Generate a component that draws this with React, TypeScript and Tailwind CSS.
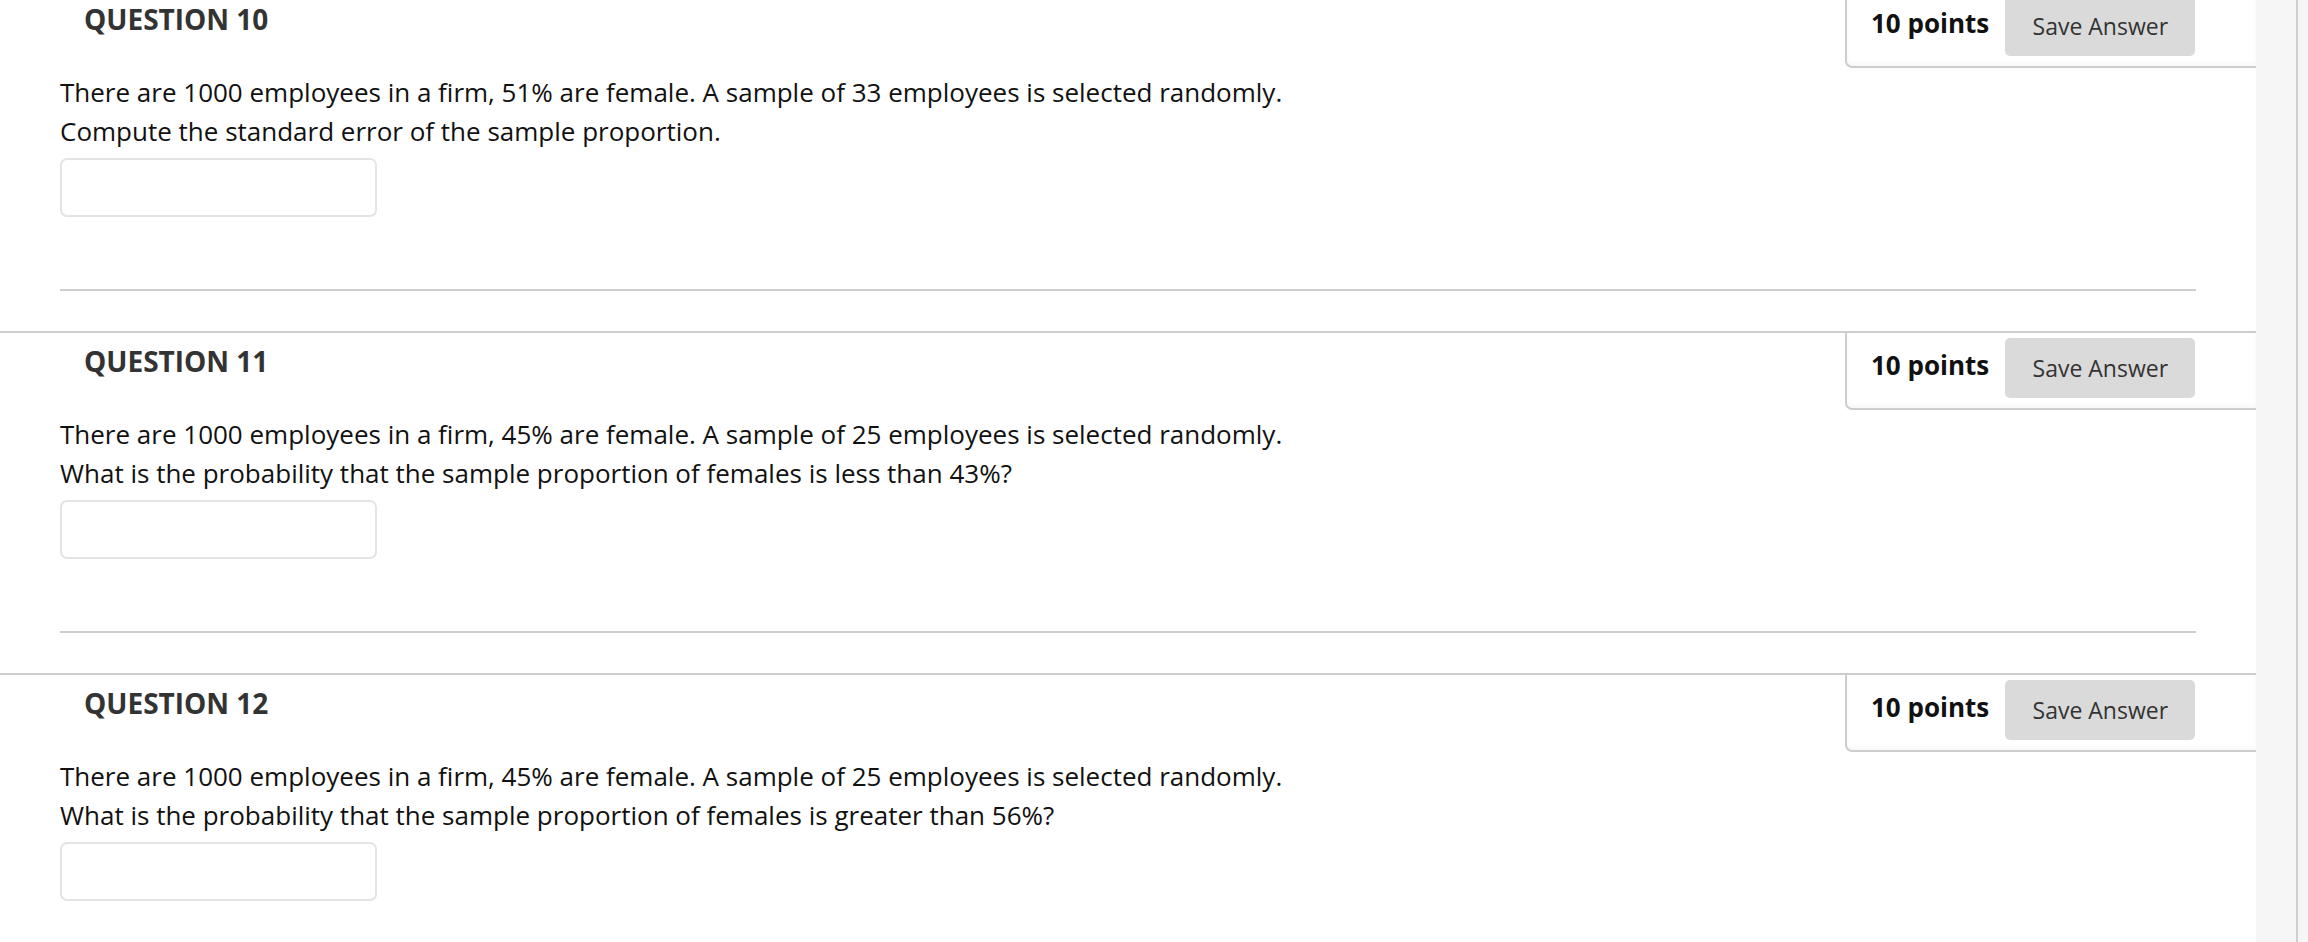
import React from "react";

const questions = [
  {
    n: 10,
    l1: "There are 1000 employees in a firm, 51% are female. A sample of 33 employees is selected randomly.",
    l2: "Compute the standard error of the sample proportion.",
  },
  {
    n: 11,
    l1: "There are 1000 employees in a firm, 45% are female. A sample of 25 employees is selected randomly.",
    l2: "What is the probability that the sample proportion of females is less than 43%?",
  },
  {
    n: 12,
    l1: "There are 1000 employees in a firm, 45% are female. A sample of 25 employees is selected randomly.",
    l2: "What is the probability that the sample proportion of females is greater than 56%?",
  },
];

function Question({ q }: { q: (typeof questions)[number] }) {
  return (
    <section className="shrink-0 border-t-2 border-[#cdcdcd] h-[342px] flex flex-col">
      <div className="flex items-start">
        <h2 className="ml-[84px] mt-[9px] text-[28px] leading-[38px] font-bold text-[#333333]">
          QUESTION {q.n}
        </h2>
        <div className="ml-auto w-[411px] h-[77px] border-l-2 border-b-2 border-[#cdcdcd] rounded-bl-[7px] flex items-start pt-[5px] pl-[24px] shadow-[inset_0_-3px_4px_rgba(0,0,0,0.03)]">
          <div className="h-[60px] flex items-center">
            <span className="text-[26px] leading-[36px] font-bold text-[#111111] pb-[6px]">10 points</span>
          </div>
          <button className="ml-[16px] w-[190px] h-[60px] bg-[#dadada] rounded-[5px] text-[23px] text-[#333333] flex items-center justify-center">
            Save Answer
          </button>
        </div>
      </div>
      <div className="ml-[60px] mt-[5px] text-[26px] leading-[38.5px] text-[#111111]">
        <p>{q.l1}</p>
        <p>{q.l2}</p>
      </div>
      <div className="ml-[60px] mt-[8px] w-[317px] h-[59px] border-2 border-[#e4e4e4] rounded-[7px] bg-white" />
      <div className="ml-[60px] mt-auto mb-[40px] w-[2136px] h-[2px] bg-[#cdcdcd]" />
    </section>
  );
}

export default function App() {
  return (
    <div
      className="w-[2308px] h-[942px] overflow-hidden flex bg-white"
      style={{ fontFamily: '"Open Sans", "Noto Sans", sans-serif' }}
    >
      <div className="w-[2256px] shrink-0 flex flex-col -mt-[11px]">
        {questions.map((q) => (
          <Question key={q.n} q={q} />
        ))}
      </div>
      <div className="flex-1 bg-[#f6f6f6] flex justify-end pr-[10px]">
        <div className="w-[2px] h-full bg-[#cfcfcf]" />
      </div>
    </div>
  );
}
